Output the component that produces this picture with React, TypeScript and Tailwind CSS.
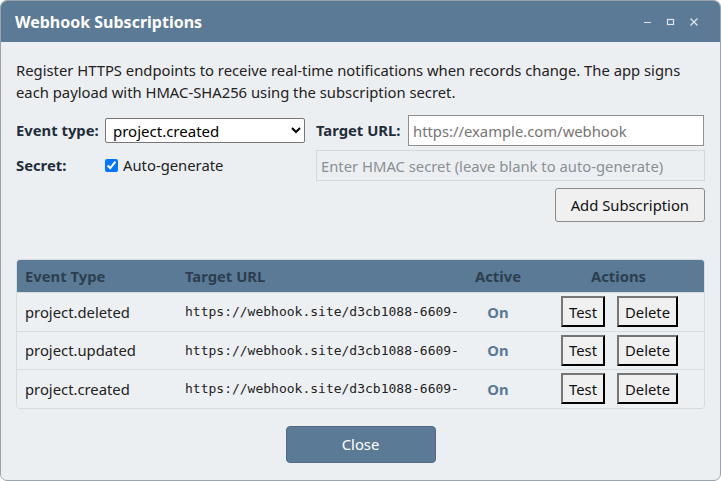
import { useState } from "react";

type Sub = { event: string; url: string; active: boolean };

const subs: Sub[] = [
  { event: "project.deleted", url: "https://webhook.site/d3cb1088-6609-", active: true },
  { event: "project.updated", url: "https://webhook.site/d3cb1088-6609-", active: true },
  { event: "project.created", url: "https://webhook.site/d3cb1088-6609-", active: true },
];

const sans = "font-['Noto_Sans','Open_Sans',sans-serif]";

export default function App() {
  const [auto, setAuto] = useState(true);
  const [eventType, setEventType] = useState("project.created");

  return (
    <div className={`h-[481px] w-[721px] overflow-hidden rounded-[7px] border border-[#9aa3ab] bg-[#eceff2] text-[14.8px] text-[#222] ${sans}`}>
      <div className="flex h-[41px] items-center justify-between bg-[#5b7a96] pl-[14px] pr-[21px]">
        <h2 className="text-[16px] font-bold text-white">Webhook Subscriptions</h2>
        <div className="flex items-center gap-[13px] text-[#dfe6ec]">
          <svg width="10" height="10" viewBox="0 0 10 10"><path d="M1 5.5h7" stroke="currentColor" strokeWidth="1" /></svg>
          <svg width="10" height="10" viewBox="0 0 10 10"><rect x="1.5" y="2.5" width="6" height="5" fill="none" stroke="currentColor" strokeWidth="1.2" /></svg>
          <svg width="10" height="10" viewBox="0 0 10 10"><path d="M1.5 1.5l7 7M8.5 1.5l-7 7" stroke="currentColor" strokeWidth="1.3" /></svg>
        </div>
      </div>

      <div className="px-[15px] pt-[17px]">
        <p className="leading-[22px]">
          Register HTTPS endpoints to receive real-time notifications when records change. The app signs each payload with HMAC-SHA256 using the subscription secret.
        </p>

        <div className="mt-[12px] grid grid-cols-[89px_211px_92px_1fr] items-center gap-y-[4px]">
          <label className="font-bold text-[#1f2d3a]">Event type:</label>
          <select
            value={eventType}
            onChange={(e) => setEventType(e.target.value)}
            className="h-[25px] w-[200px] rounded-[2px] border border-[#767676] bg-white px-[3px] text-[15px] text-black"
          >
            <option>project.created</option>
            <option>project.updated</option>
            <option>project.deleted</option>
          </select>
          <label className="font-bold text-[#1f2d3a]">Target URL:</label>
          <input
            className="h-[31px] w-[296px] justify-self-start border border-[#8f8f8f] bg-white px-[4px] text-[14.8px] placeholder:text-[#757575]"
            placeholder="https://example.com/webhook"
          />

          <label className="font-bold text-[#1f2d3a]">Secret:</label>
          <label className="col-span-2 flex items-center gap-[5px]">
            <input type="checkbox" checked={auto} onChange={(e) => setAuto(e.target.checked)} className="m-0 h-[13px] w-[13px] accent-[#0075ff]" />
            <span>Auto-generate</span>
          </label>
          <input
            disabled={auto}
            className="-ml-[92px] h-[31px] w-[389px] justify-self-start border border-[#d4d8dc] bg-[#eceff2] px-[4px] text-[14.8px] placeholder:text-[#8a8f94]"
            placeholder="Enter HMAC secret (leave blank to auto-generate)"
          />
        </div>

        <div className="mt-[7px] flex justify-end">
          <button className="h-[34px] rounded-[3px] border border-[#8a8a8a] bg-[#f0f0f0] px-[15px] text-[14.8px] text-[#111]">
            Add Subscription
          </button>
        </div>

        <div className="mt-[37px] overflow-hidden rounded-[4px] border border-[#d7dce1]">
          <div className="grid h-[32px] grid-cols-[160px_286px_70px_1fr] items-center bg-[#5b7a96] font-bold text-[#2c3e50]">
            <div className="pl-[8px]">Event Type</div>
            <div className="pl-[8px]">Target URL</div>
            <div className="text-center">Active</div>
            <div className="text-center">Actions</div>
          </div>
          {subs.map((s, i) => (
            <div
              key={i}
              className="grid h-[38.5px] grid-cols-[160px_286px_70px_1fr] items-center border-t border-[#d7dce1] bg-[#edf0f3] first:border-t-0"
            >
              <div className="pl-[8px] text-[#222]">{s.event}</div>
              <div className="whitespace-nowrap pl-[8px] font-['DejaVu_Sans_Mono',monospace] text-[13px] text-[#222]">
                {s.url}
              </div>
              <div className="text-center font-bold text-[#5b7a96]">{s.active ? "On" : "Off"}</div>
              <div className="flex items-center justify-center gap-[12px] pl-[2px]">
                <button className="h-[31px] border-2 border-[#222] bg-[#f0f0f0] px-[6px] text-[14.8px] text-[#111] [border-style:outset]">Test</button>
                <button className="h-[31px] border-2 border-[#222] bg-[#f0f0f0] px-[6px] text-[14.8px] text-[#111] [border-style:outset]">Delete</button>
              </div>
            </div>
          ))}
        </div>

        <div className="mt-[17px] flex justify-center">
          <button className="h-[37px] w-[150px] rounded-[4px] border border-[#4e6b85] bg-[#5b7a96] text-[14.8px] text-white">Close</button>
        </div>
      </div>
    </div>
  );
}
